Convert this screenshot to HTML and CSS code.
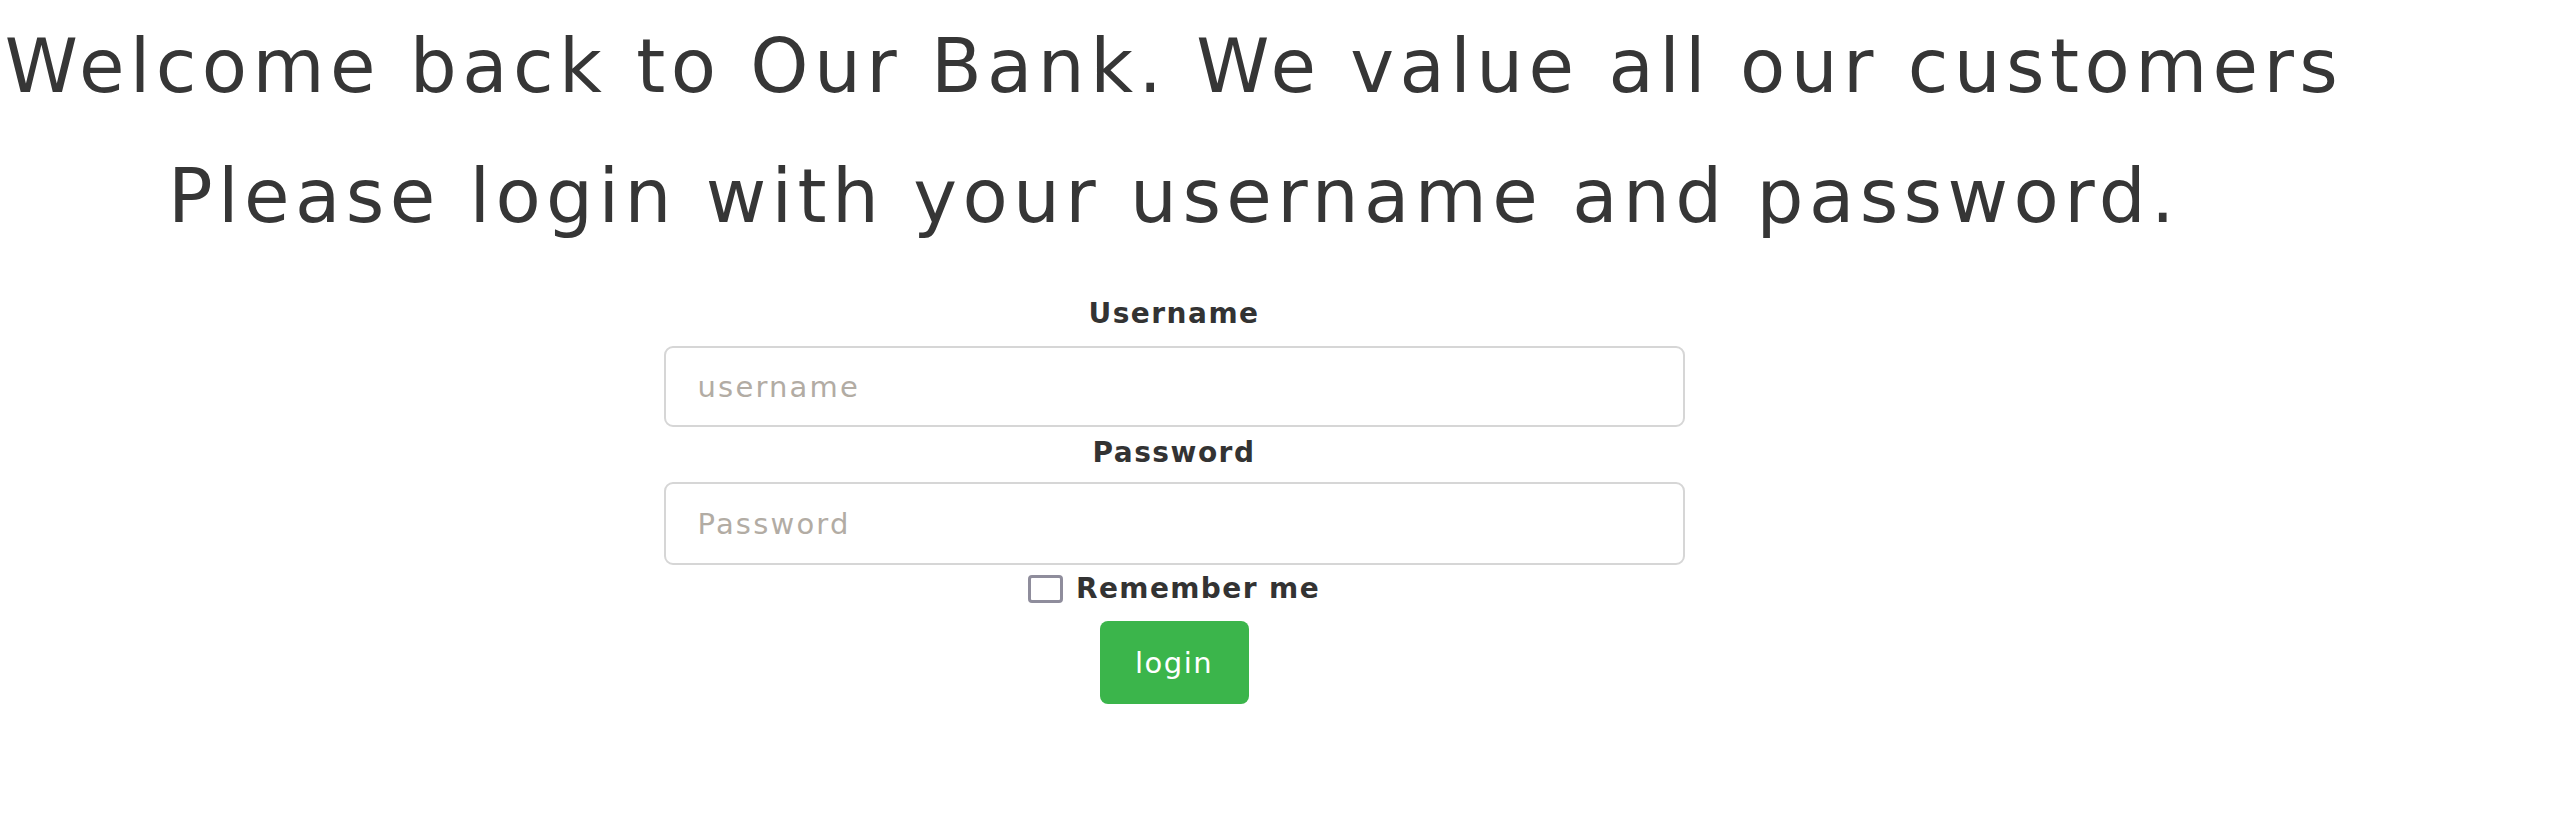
FILE: index.html
```html
<!DOCTYPE html>
<html lang="en">
<head>
<meta charset="utf-8">
<title>Our Bank - Login</title>
<link rel="stylesheet" href="styles.css">
</head>
<body>
<main class="page">
  <h1 class="headline">Welcome back to Our Bank. We value all our customers</h1>
  <h2 class="headline">Please login with your username and password.</h2>
  <form class="login-form">
    <label class="field-label" for="username">Username</label>
    <input class="field field-user" id="username" type="text" placeholder="username">
    <label class="field-label label-pass" for="password">Password</label>
    <input class="field field-pass" id="password" type="password" placeholder="Password">
    <div class="remember">
      <input class="check" id="remember" type="checkbox">
      <label class="remember-text" for="remember">Remember me</label>
    </div>
    <button class="btn-login" type="button">login</button>
  </form>
</main>
</body>
</html>
```
FILE: styles.css
```css
html, body {
  margin: 0;
  padding: 0;
  background: #ffffff;
}
body {
  font-family: "DejaVu Sans", "Open Sans", sans-serif;
  color: #343434;
}
.page {
  width: 2348px;
  padding-top: 1px;
  display: flex;
  flex-direction: column;
  align-items: center;
  text-align: center;
}
.headline {
  margin: 0;
  font-size: 74px;
  font-weight: 400;
  line-height: 130px;
  letter-spacing: 5.4px;
  color: #363636;
  white-space: nowrap;
}
.login-form {
  display: flex;
  flex-direction: column;
  align-items: center;
}
.field-label {
  display: block;
  margin-top: 35px;
  font-size: 28px;
  font-weight: 700;
  line-height: 36px;
  letter-spacing: 1.5px;
  color: #333333;
}
.label-pass {
  margin-top: 8px;
}
.field {
  box-sizing: border-box;
  width: 1021px;
  margin: 14px 0 0;
  padding: 0 32px;
  border: 2px solid #d6d6d6;
  border-radius: 9px;
  background: #fff;
  font-family: "DejaVu Sans", "Open Sans", sans-serif;
  font-size: 29px;
  letter-spacing: 2.2px;
  color: #333;
  outline: none;
}
.field::placeholder {
  color: #b2aca4;
}
.field-user {
  height: 81px;
}
.field-pass {
  height: 83px;
  margin-top: 11px;
}
.remember {
  display: flex;
  align-items: center;
  gap: 13px;
  height: 36px;
  margin-top: 6px;
}
.check {
  appearance: none;
  -webkit-appearance: none;
  box-sizing: border-box;
  width: 35px;
  height: 28px;
  margin: 0;
  border: 3px solid #8f8d9c;
  border-radius: 4px;
  background: #fff;
}
.remember-text {
  font-size: 28px;
  font-weight: 700;
  line-height: 36px;
  letter-spacing: 1.4px;
  color: #333333;
}
.btn-login {
  box-sizing: border-box;
  width: 149px;
  height: 83px;
  margin-top: 14px;
  border: none;
  border-radius: 8px;
  background: #3bb54b;
  color: #ffffff;
  font-family: "DejaVu Sans", "Open Sans", sans-serif;
  font-size: 29px;
  font-weight: 400;
  letter-spacing: 1.5px;
  padding: 0;
}
```
